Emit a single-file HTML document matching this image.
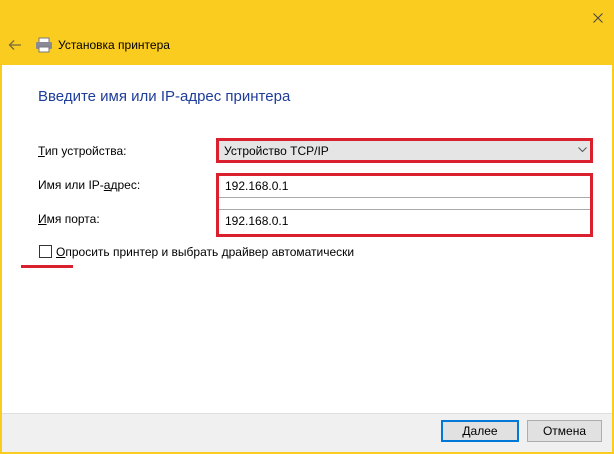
<!DOCTYPE html>
<html><head><meta charset="utf-8"><style>
*{margin:0;padding:0;box-sizing:border-box}
body{width:614px;height:454px;background:#f9cc1f;position:relative;overflow:hidden;font-family:"Segoe UI","Liberation Sans","DejaVu Sans",sans-serif;font-size:12px;color:#000}
.abs{position:absolute}
#main{left:2px;top:65px;width:610px;height:348px;background:#fff}
#foot{left:2px;top:413px;width:610px;height:39px;background:#f0f0f0;border-top:1px solid #dfdfdf}
.red{border:3px solid #d9202c}
.lbl{font-size:12px}
.btn{height:22px;border:1px solid #adadad;background:#e1e1e1;text-align:center;line-height:20px;font-size:12px}
u{text-decoration:underline}
</style></head><body>
<svg class="abs" style="left:593px;top:13px" width="10" height="10" viewBox="0 0 10 10"><path d="M0.5 0.5L9.5 9.5M9.5 0.5L0.5 9.5" stroke="#444" stroke-width="1"/></svg>
<svg class="abs" style="left:8px;top:39px" width="14" height="12" viewBox="0 0 14 12"><path d="M13 6H2M6 1.5L1.5 6 6 10.5" stroke="#7a6a3a" stroke-width="1.3" fill="none"/></svg>
<svg class="abs" style="left:35px;top:37px" width="18" height="16" viewBox="0 0 18 16"><rect x="4" y="1" width="10" height="5" fill="#fff" stroke="#777"/><rect x="1" y="5" width="16" height="7" rx="1" fill="#8a8a96"/><rect x="4" y="10" width="10" height="5" fill="#fff" stroke="#777"/></svg>
<div class="abs" style="left:58px;top:38px;font-size:12px">Установка принтера</div>
<div id="main" class="abs"></div>
<div id="foot" class="abs"></div>
<div class="abs" style="left:38px;top:88px;font-size:15px;color:#1f3d9a">Введите имя или IP-адрес принтера</div>
<div class="abs lbl" style="left:38px;top:144px"><u>Т</u>ип устройства:</div>
<div class="abs lbl" style="left:38px;top:178px">Имя или IP-<u>а</u>дрес:</div>
<div class="abs lbl" style="left:38px;top:212px"><u>И</u>мя порта:</div>
<div class="abs red" style="left:216px;top:138px;width:377px;height:25px;background:#e5e5e5"></div>
<div class="abs lbl" style="left:224px;top:144px">Устройство TCP/IP</div>
<svg class="abs" style="left:578px;top:147px" width="9" height="6" viewBox="0 0 9 6"><path d="M0.5 0.5L4.5 4.5 8.5 0.5" stroke="#555" fill="none"/></svg>
<div class="abs red" style="left:216px;top:173px;width:377px;height:64px;background:#fff"></div>
<div class="abs" style="left:219px;top:197px;width:371px;height:13px;border-top:1px solid #aaa;border-bottom:1px solid #aaa"></div>
<div class="abs lbl" style="left:225px;top:179px">192.168.0.1</div>
<div class="abs lbl" style="left:225px;top:214px">192.168.0.1</div>
<div class="abs" style="left:39px;top:245px;width:13px;height:13px;border:1px solid #333;background:#fff"></div>
<div class="abs lbl" style="left:56px;top:245px"><u>О</u>просить принтер и выбрать драйвер автоматически</div>
<div class="abs" style="left:21px;top:265px;width:52px;height:3px;background:#d9202c"></div>
<div class="abs btn" style="left:441px;top:420px;width:78px;border:2px solid #0078d7;line-height:18px"><u>Д</u>алее</div>
<div class="abs btn" style="left:527px;top:420px;width:75px">Отмена</div>
</body></html>
